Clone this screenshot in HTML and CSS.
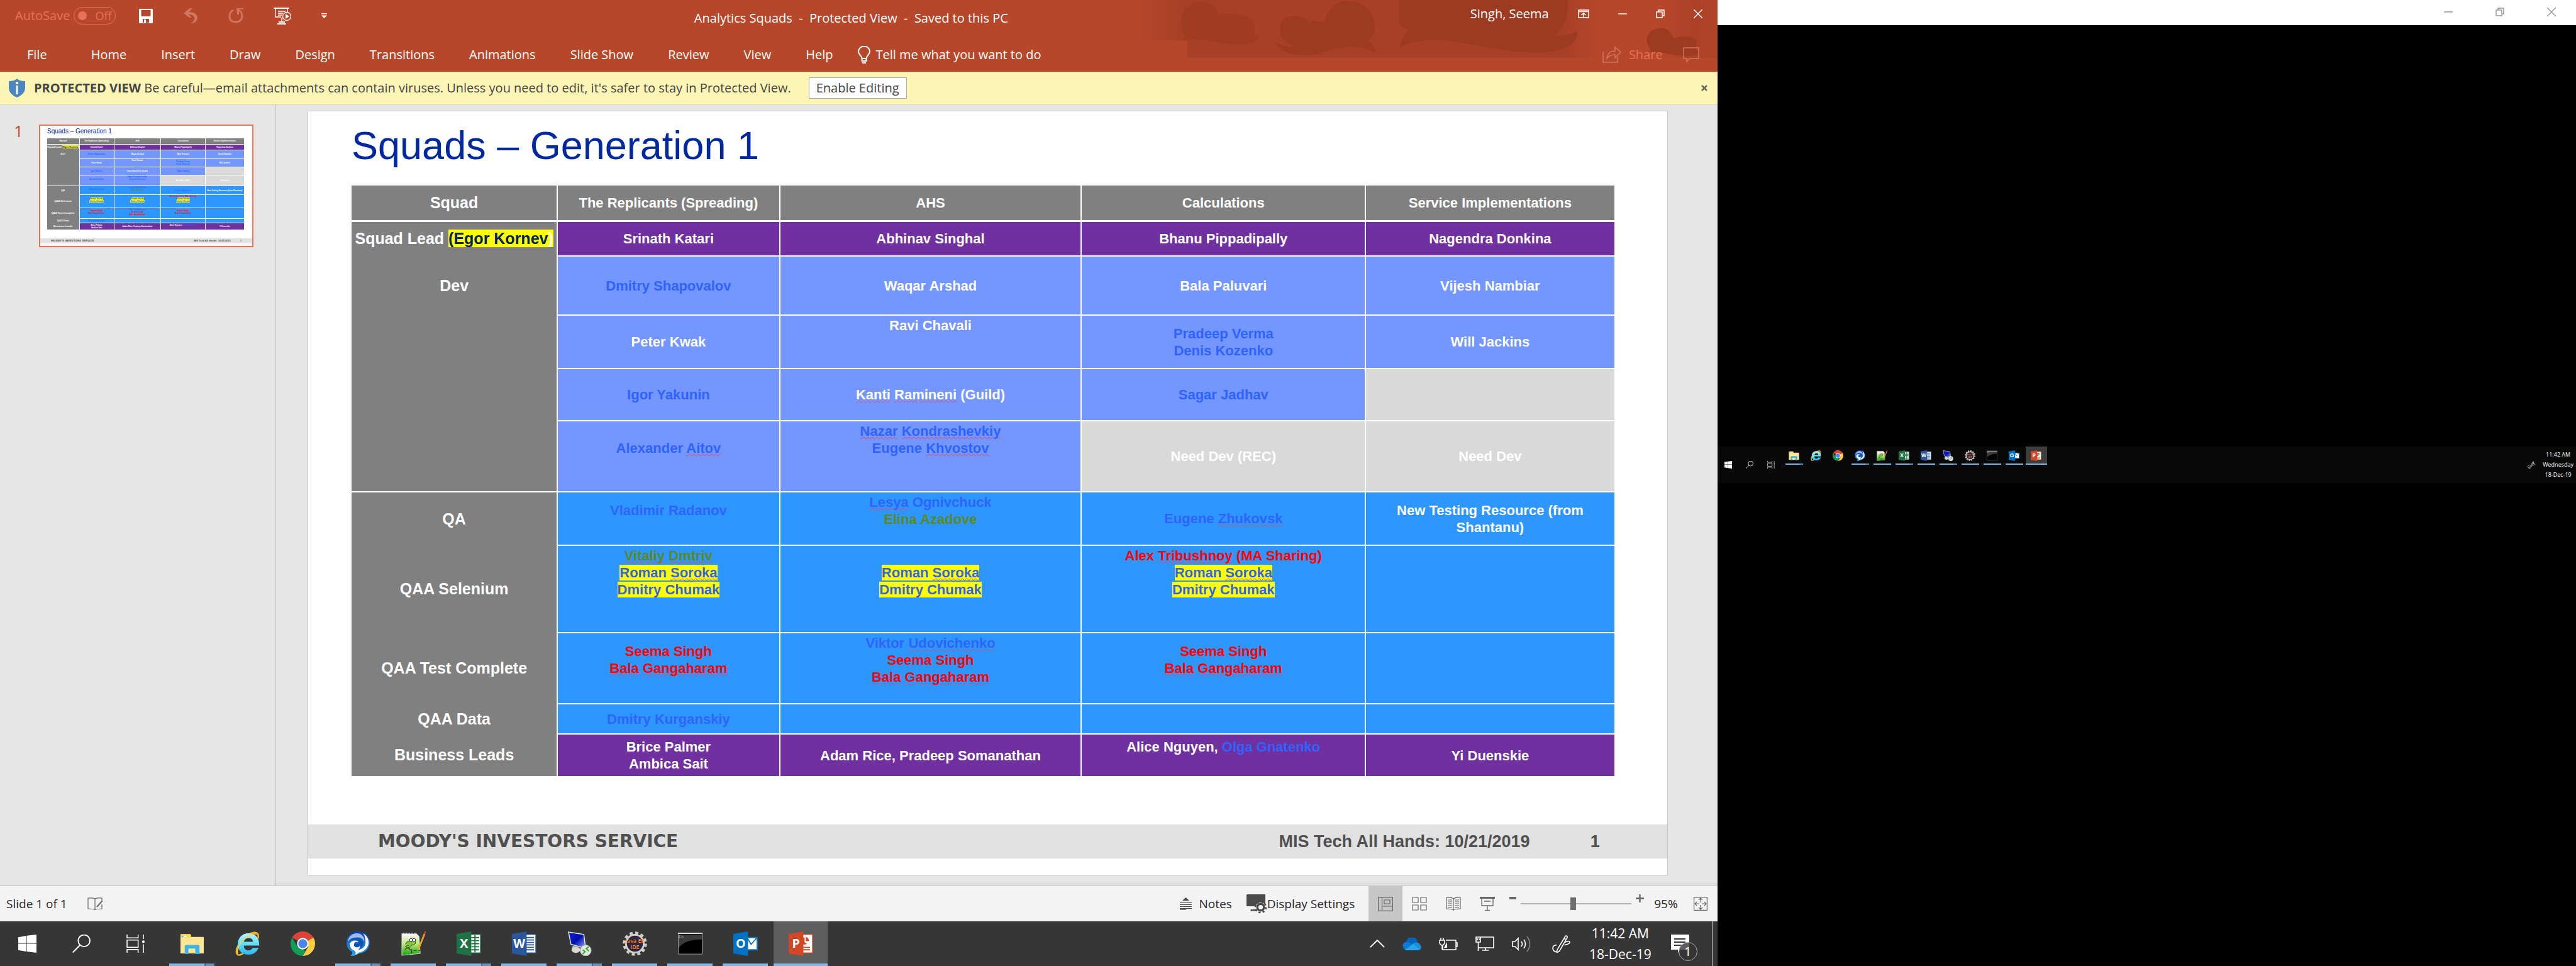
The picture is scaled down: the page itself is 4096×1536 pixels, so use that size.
FILE: index.html
```
<!DOCTYPE html>
<html lang="en">
<head>
<meta charset="utf-8">
<title>Analytics Squads - Protected View</title>
<link rel="stylesheet" href="styles.css">
</head>
<body>
<svg class="defs" aria-hidden="true">
  <defs>
    <linearGradient id="ie" x1="0" y1="0" x2="0" y2="1"><stop offset="0" stop-color="#b8f4ff"/><stop offset=".5" stop-color="#5fe0fb"/><stop offset="1" stop-color="#2cb4ec"/></linearGradient>
    <linearGradient id="np" x1="0" y1="0" x2="0" y2="1"><stop offset=".1" stop-color="#f4f4f4"/><stop offset=".5" stop-color="#b9e86a"/><stop offset="1" stop-color="#12a012"/></linearGradient>
    <linearGradient id="rd" x1="0" y1="0" x2="1" y2="1"><stop offset="0" stop-color="#0a1fd8"/><stop offset=".5" stop-color="#0010b0"/><stop offset="1" stop-color="#9db4ff"/></linearGradient>
    <linearGradient id="jb" x1="0" y1="0" x2="0" y2="1"><stop offset="0" stop-color="#0b3fae"/><stop offset="1" stop-color="#2aa5ee"/></linearGradient>
  </defs>
  <symbol id="i-start" viewBox="0 0 28 28"><path fill="#fff" d="M0 4l12-2v11H0zM13 1.800L28 0v13H13zM0 14h12v12L0 24zM13 14h15v14l-15-2z"/></symbol>
  <symbol id="i-search" viewBox="0 0 28 28"><circle cx="18" cy="9.500" r="9" fill="none" stroke="#fff" stroke-width="1.800"/><path d="M11.500 16.500L.8 27.500" stroke="#fff" stroke-width="2"/></symbol>
  <symbol id="i-tasks" viewBox="0 0 28 28"><path fill="none" stroke="#fff" stroke-width="1.500" d="M1 0v5h17V0M1 28v-5h17v5M1 8.500h17v11H1zM26 0v7M26 15v13"/><circle cx="26" cy="11" r="2" fill="#fff"/></symbol>
  <symbol id="i-folder" viewBox="0 0 40 40"><path fill="#f5c342" d="M1 5q0-1 1-1h15l2 4H1z"/><path fill="#ffe692" d="M1 9h37q1 0 1 1v25q0 1-1 1H1z"/><path fill="#ffd65b" d="M1 5h15q2 0 2 3v2H1z"/><path fill="#fff" d="M3 7h8v2H3z"/><path fill="#4db6e6" d="M3 7h3v2H3z"/><path fill="#39b5ea" d="M8 24q0-2 2-2h20q2 0 2 2v13h-7v-9H14v9H8z"/></symbol>
  <symbol id="i-ie" viewBox="0 0 40 40"><path fill="none" stroke="#f2b01e" stroke-width="2.600" d="M37 12C40 2 33-1 22 5 8 13-1 30 3 37c2 3 7 1 11-2"/><path fill="url(#ie)" d="M22 3C11 3 4 11 4 21s7 17 18 17c7 0 13-4 16-11H28c-1 3-3 4-6 4-5 0-8-3-8-8h25c1-12-6-20-17-20zm-8 14c1-4 4-6 8-6s7 2 7 6z"/><path fill="none" stroke="#fbd24a" stroke-width="1.600" d="M35 5C30 1 14 9 7 22 4 28 3 33 4 36"/></symbol>
  <symbol id="i-chrome" viewBox="0 0 40 40"><path fill="#db4437" d="M20 20L2.700 10a20 20 0 0134.600 0z"/><path fill="#ffcd40" d="M20 20L37.300 10A20 20 0 0120 40l8.700-15z"/><path fill="#0f9d58" d="M20 40A20 20 0 012.700 10l8.600 15L20 29l4 3z"/><path fill="#db4437" d="M2.700 10A20 20 0 0137.300 11H20z"/><circle cx="20" cy="20" r="9.400" fill="#fff"/><circle cx="20" cy="20" r="7.400" fill="#4a86f0"/></symbol>
  <symbol id="i-chat" viewBox="0 0 40 40"><path fill="url(#jb)" d="M20 0c11 0 19 8 19 18 0 9-6 16-16 18l-4 1c-3 2-8 4-12 3 3-1 4-4 3-7C4 30 1 25 1 18 1 8 9 0 20 0z"/><path fill="#fff" d="M28 3c5 3 9 8 9 15 0 8-6 14-14 16-3 0-2 2-8 4 3-4-1-6-3-8 9 2 20-2 20-12 0-6-1-11-4-15z"/><path fill="#9fb9e8" d="M3 18C3 9 10 3 18 3c8 0 13 6 12 14-2-5-7-8-13-7C9 10 5 13 3 18z"/><path fill="#0c57b4" d="M9 14c6-5 18-3 19 6 0 6-4 10-11 10-7 0-11-4-12-9 4 0 4 0 6 1 0-5 5-7 10-5-3-4-8-4-12-2z"/><path fill="#fff" d="M6 20c3-6 12-7 15-2-5-2-8 0-8 5 2 4 8 4 10 0 1 6-5 9-9 8-5-1-8-6-8-11z"/></symbol>
  <symbol id="i-notepad" viewBox="0 0 40 40"><path fill="url(#np)" stroke="#dcdcdc" d="M1 3h23l5 5 2 28L1 39z"/><path stroke="#444" stroke-width="2" stroke-dasharray="1 1.500" d="M2 3h22"/><path fill="#7ccc35" stroke="#334" stroke-width="1" d="M7 21c2-6 7-6 10-4 0-6 7-4 6 0 1 4-3 6-6 5-3 6-9 6-10 2l5-1"/><circle cx="16" cy="14" r="2.500" fill="#fff" stroke="#333"/><circle cx="21" cy="14" r="2.500" fill="#fff" stroke="#333"/><path fill="none" stroke="#333" stroke-width="1.200" d="M6 30c3-4 7-4 9 1M17 29v6M20 31h5M28 31h4"/><path stroke="#e9a521" stroke-width="2.800" d="M28 29L38 4"/><path stroke="#c43a3a" stroke-width="2.800" d="M38 4l1.200-4"/></symbol>
  <symbol id="i-excel" viewBox="0 0 40 40"><path fill="#fff" stroke="#207245" stroke-width="1.500" d="M22 5h17v30H22z"/><path stroke="#207245" stroke-width="2" d="M24 10h13M24 15h13M24 20h13M24 25h13M24 30h13M30 6v28"/><path fill="#207245" d="M0 4l24-4v40L0 36z"/></symbol>
  <symbol id="i-word" viewBox="0 0 40 40"><path fill="#fff" stroke="#2b579a" stroke-width="1.500" d="M22 5h17v30H22z"/><path stroke="#2b579a" stroke-width="1.800" d="M23 10h13M23 14h13M23 18h13M23 22h13M23 26h13M23 30h13"/><path fill="#2b579a" d="M0 4l24-4v40L0 36z"/></symbol>
  <symbol id="i-remote" viewBox="0 0 40 40"><path fill="url(#rd)" stroke="#e8e8e8" stroke-width="1.500" d="M2 1l25 4 3 23L6 21z"/><path fill="#b9b9b9" d="M9 23l7 2 2 6H7z"/><ellipse cx="14" cy="30" rx="7" ry="5" fill="#d8d8d8"/><circle cx="30" cy="31" r="9" fill="#e4e4e4" stroke="#a9a9a9"/><path fill="none" stroke="#34b024" stroke-width="2.200" d="M25 30l4 3-4 4M35 25l-4 3 4 4"/></symbol>
  <symbol id="i-java" viewBox="0 0 40 40"><circle cx="20" cy="20" r="17.500" fill="none" stroke="#cfcdc8" stroke-width="4.500" stroke-dasharray="5 4.160"/><circle cx="20" cy="20" r="14.500" fill="#2c2440" stroke="#d6d4cf" stroke-width="3"/></symbol>
  <symbol id="i-cmd" viewBox="0 0 40 40"><path fill="#000" stroke="#9a9fa3" stroke-width="1" d="M.5 3h39v34H.5z"/><path fill="#3b3b3b" d="M1 5h38v8C22 13 8 17 1 27z"/><path fill="#d9dee2" d="M0 2h40v2H0z"/><path fill="none" stroke="#bbb" stroke-width=".8" d="M4 7H2v3h2M6 7v1M6 9v1M7 7l2 3"/></symbol>
  <symbol id="i-outlook" viewBox="0 0 40 40"><path fill="#0072c6" d="M22 9h18v22H22z"/><path fill="#fff" d="M23 11h15v18H23z"/><path fill="none" stroke="#0072c6" stroke-width="1.800" d="M23 11l6 10 9-10"/><path fill="#0072c6" d="M0 4l24-4v40L0 36z"/></symbol>
  <symbol id="i-ppt" viewBox="0 0 40 40"><path fill="#fff" stroke="#d24726" stroke-width="1.500" d="M22 5h17v30H22z"/><path fill="#d24726" d="M22 11a6 6 0 108 9l-4-2V10a6 6 0 00-4 1zM28 9v7h5a6 6 0 00-5-7zM23 25h12v2H23zM23 29h12v2H23z"/><path fill="#d24726" d="M0 4l24-4v40L0 36z"/></symbol>
  <symbol id="i-pen" viewBox="0 0 28 28"><path fill="none" stroke="#fff" stroke-width="1.600" d="M8 27c-1 .5-1-1 0-4L20 3c1-2 4-1 3 2L12 24c-1 2-2 3-4 3zM18 6l4 2M7 16c-4 0-6 2-6 5s2 5 6 6M20 12c4-3 7-2 7 0s-3 3-8 4"/></symbol>
  <symbol id="i-min" viewBox="0 0 14 14"><path d="M0 7h14" stroke="currentColor" stroke-width="1.500"/></symbol>
  <symbol id="i-restore" viewBox="0 0 14 14"><path fill="none" stroke="currentColor" stroke-width="1.500" d="M1 4h9v9H1zM4 4V1h9v9h-3"/></symbol>
  <symbol id="i-close" viewBox="0 0 14 14"><path d="M0 0l14 14M14 0L0 14" stroke="currentColor" stroke-width="1.500"/></symbol>
</svg>

<main class="screen primary">
  <header class="chrome">
    <svg class="art" viewBox="-80 0 1576 390" preserveAspectRatio="none" aria-hidden="true">
      <defs><linearGradient id="fade" x1="0" x2="1" y1="0" y2="0"><stop offset="0" stop-color="#a84027" stop-opacity="0"/><stop offset=".08" stop-color="#a84027"/><stop offset=".74" stop-color="#a84027"/><stop offset=".8" stop-color="#b7472a"/><stop offset=".9" stop-color="#b7472a"/><stop offset=".96" stop-color="#ab4127"/><stop offset="1" stop-color="#b04428"/></linearGradient></defs>
      <path fill="url(#fade)" d="M-80 0h1576v390H66V273H-80z"/>
      <path fill="#a03c24" d="M50 130C55 50 80 10 105 12c30 5 45 50 45 90 40-20 95 0 98 60v80l8-8c5 50-30 70-60 68-60-10-90-50-146-28 5-20 10-30 8-40-8-30-10-60-8-104z"/>
      <path fill="#9c3a22" d="M316 190c0-50 15-82 38-82 25 0 35 25 42 50l12-22c5 10 15 15 28 8 10-80 30-140 66-138 48 10 70 90 70 180 0 35-10 70-18 92 15 30 20 50 19 80-50-80-100-30-150 2-50 30-100 10-120-70l3-1c15 20 30 28 50 28-20-20-40-50-40-127z"/>
      <path fill="#9c3a22" d="M636 0h458c0 110-10 180-36 242 30 0 45-10 58-30 10 50-20 140-100 142-110 5-200-84-280-84-50 0-80 20-98 58 5-50 10-90 26-125-8-15-28-30-28-60z"/>
      <path fill="#9c3a22" d="M1306 270c0-45 15-80 38-80 20 0 28 30 34 70 20-20 60-20 62 20v60l4 8c0 30-30 40-70 20-20-10-40-25-62-15 5-15 4-20 2-30-6-20-8-35-8-53z"/>
    </svg>
    <div class="titlebar">
      <div class="quick">
        <label class="autosave">AutoSave <span class="toggle"><input type="checkbox">Off</span></label>
        <button class="bare save" aria-label="Save"><svg width="22" height="23" viewBox="0 0 22 23"><path fill="#fff" d="M1 0h20l1 1v21l-1 1H1l-1-1V1zM3.500 2v10h15V2zM6 16v6h2v-5h3v5h5v-6z" fill-rule="evenodd"/></svg></button>
        <button class="bare" aria-label="Undo"><svg width="24" height="24" viewBox="0 0 24 24"><path fill="#cf7660" d="M11 0h4L9 6c9 0 14 4 14 9 0 4-3 8-8 9h-3c5-2 6-5 6-8 0-4-4-6-9-6l5 5h-4L1 8z"/></svg></button>
        <button class="bare" aria-label="Redo"><svg width="24" height="24" viewBox="0 0 24 24"><path fill="none" stroke="#cf7660" stroke-width="3" d="M8 3C4 5 2 8 2 13c0 6 4 9 10 9s10-4 10-9c0-4-2-8-6-10"/><path fill="#cf7660" d="M13 0h11v2h-7v8h-3z"/></svg></button>
        <button class="bare" aria-label="Start from beginning"><svg width="28" height="27" viewBox="0 0 28 27"><path fill="#fff" d="M0 0h25v2H0zM6 25h14v2H6zM8 22h10v2H8z"/><path fill="none" stroke="#fff" stroke-width="1.300" d="M3 2v13h9M22 2v5M7 6h12M7 9h8M7 12h6M13 16v6"/><circle cx="21" cy="14" r="6.500" fill="none" stroke="#fff" stroke-width="1.300"/><path fill="#fff" d="M19 10l6 4-6 4z"/></svg></button>
        <button class="bare" aria-label="Customize toolbar"><svg width="9" height="8" viewBox="0 0 9 8"><path fill="#fff" d="M0 0h9v1.500H0zM0 3.500h9L4.500 8z"/></svg></button>
      </div>
      <h1 class="doc-title">Analytics Squads&nbsp; -&nbsp; Protected View&nbsp; -&nbsp; Saved to this PC</h1>
      <div class="window-tools">
        <span>Singh, Seema</span>
        <button class="bare" aria-label="Ribbon options"><svg width="18" height="14" viewBox="0 0 18 14"><path fill="none" stroke="#fff" stroke-width="1.500" d="M1 1h16v12H1zM1 3.500h16M9 12V6M5.500 9L9 6l3.500 3"/></svg></button>
        <button class="bare" aria-label="Minimize"><svg width="14" height="14"><use href="#i-min"/></svg></button>
        <button class="bare" aria-label="Restore"><svg width="14" height="14"><use href="#i-restore"/></svg></button>
        <button class="bare" aria-label="Close"><svg width="14" height="14"><use href="#i-close"/></svg></button>
      </div>
    </div>
    <nav class="tabs">
      <a class="file" href="#">File</a><a href="#">Home</a><a href="#">Insert</a><a href="#">Draw</a><a href="#">Design</a><a href="#">Transitions</a><a href="#">Animations</a><a href="#">Slide Show</a><a href="#">Review</a><a href="#">View</a><a href="#">Help</a>
      <a class="tell" href="#"><svg width="20" height="28" viewBox="0 0 20 28"><path fill="none" stroke="#fff" stroke-width="2" d="M6.500 24v-4C6 15 1 14 1 9a9 8.500 0 0118 0c0 5-5 6-5.500 11v4zM6.500 20h7"/><path fill="#fff" d="M7 26h6v2H7z"/></svg>Tell me what you want to do</a>
      <button class="bare share"><svg width="30" height="26" viewBox="0 0 30 26"><path fill="none" stroke="#cf7660" stroke-width="1.500" d="M1 8v17h23v-9M7 19C8 11 13 7 20 7V1l9 8-9 9v-5c-6 0-10 2-13 6z"/></svg>Share</button>
      <button class="bare" aria-label="Comments"><svg width="26" height="24" viewBox="0 0 26 24"><path fill="none" stroke="#cf7660" stroke-width="1.500" d="M1 1h24v17H11l-5 5v-5H1z"/></svg></button>
    </nav>
  </header>

  <section class="notice">
    <svg width="26" height="30" viewBox="0 0 26 30"><path fill="#4b86c0" d="M13 0c3 3 8 4 13 4v11c0 7-6 12-13 15C6 27 0 22 0 15V4c5 0 10-1 13-4z"/><circle cx="13" cy="7" r="2.200" fill="#fff"/><path fill="#fff" d="M11.500 11h3v14h-3z"/></svg>
    <p><strong>PROTECTED VIEW</strong> Be careful—email attachments can contain viruses. Unless you need to edit, it's safer to stay in Protected View.</p>
    <button class="enable">Enable Editing</button>
    <button class="bare dismiss" aria-label="Close message"><svg width="10" height="10" viewBox="0 0 10 10"><path stroke="#666" stroke-width="2.500" d="M1 1l8 8M9 1L1 9"/></svg></button>
  </section>

  <div class="workspace">
    <aside class="thumbs">
      <span class="num">1</span>
      <div class="thumb"></div>
    </aside>
    <section class="stage">
      <article class="slide">
        <h2>Squads – Generation 1</h2>
        <table>
          <colgroup><col class="c1"><col class="c2"><col class="c3"><col class="c4"><col class="c5"></colgroup>
          <thead>
            <tr class="r56 head"><th scope="col">Squad</th><th scope="col">The Replicants (Spreading)</th><th scope="col">AHS</th><th scope="col">Calculations</th><th scope="col">Service Implementations</th></tr>
          </thead>
          <tbody>
            <tr class="r56 lead"><th scope="row">Squad Lead <mark class="navy">(Egor Kornev<i>)</i></mark></th><td>Srinath Katari</td><td>Abhinav Singhal</td><td>Bhanu Pippadipally</td><td>Nagendra Donkina</td></tr>
            <tr class="r94 dev"><th scope="row">Dev</th><td class="blue">Dmitry Shapovalov</td><td>Waqar Arshad</td><td>Bala Paluvari</td><td>Vijesh Nambiar</td></tr>
            <tr class="r85 dev"><th></th><td>Peter Kwak</td><td class="top">Ravi Chavali</td><td class="blue">Pradeep Verma<br>Denis Kozenko</td><td>Will Jackins</td></tr>
            <tr class="r83 dev"><th></th><td class="blue">Igor Yakunin</td><td><u>Kanti</u> <u>Ramineni</u> (Guild)</td><td class="blue">Sagar Jadhav</td><td class="open"></td></tr>
            <tr class="r113 dev end"><th></th><td class="blue raised">Alexander <u>Aitov</u></td><td class="blue top"><u>Nazar</u> <u>Kondrashevkiy</u><br>Eugene <u>Khvostov</u></td><td class="open">Need Dev (REC)</td><td class="open">Need Dev</td></tr>
            <tr class="r85 qa"><th scope="row">QA</th><td class="blue raised">Vladimir Radanov</td><td class="blue top"><u>Lesya</u> Ognivchuck<br><span class="green">Elina Azadove</span></td><td class="blue">Eugene <u>Zhukovsk</u></td><td>New Testing Resource (from Shantanu)</td></tr>
            <tr class="r139 qa"><th scope="row">QAA Selenium</th><td class="top"><span class="green"><u>Vitaliy</u> <u>Dmtriv</u></span><br><mark>Roman <u>Soroka</u></mark><br><mark>Dmitry Chumak</mark></td><td class="top"><br><mark>Roman <u>Soroka</u></mark><br><mark>Dmitry Chumak</mark></td><td class="top red">Alex <u>Tribushnoy</u> (MA Sharing)<br><mark>Roman <u>Soroka</u></mark><br><mark>Dmitry Chumak</mark></td><td></td></tr>
            <tr class="r113 qa"><th scope="row">QAA Test Complete</th><td class="red raised">Seema Singh<br><u>Bala</u> <u>Gangaharam</u></td><td class="red top"><span class="blue">Viktor <u>Udovichenko</u></span><br>Seema Singh<br><u>Bala</u> <u>Gangaharam</u></td><td class="red raised">Seema Singh<br><u>Bala</u> <u>Gangaharam</u></td><td></td></tr>
            <tr class="r48 qa"><th scope="row">QAA Data</th><td class="blue">Dmitry Kurganskiy</td><td></td><td></td><td></td></tr>
            <tr class="r67 lead"><th scope="row">Business Leads</th><td>Brice Palmer<br>Ambica Sait</td><td>Adam Rice, Pradeep Somanathan</td><td class="raised">Alice Nguyen, <span class="blue">Olga Gnatenko</span></td><td>Yi Duenskie</td></tr>
          </tbody>
        </table>
        <footer><span class="brand">MOODY'S INVESTORS SERVICE</span><span class="event">MIS Tech All Hands: 10/21/2019</span><span>1</span></footer>
      </article>
    </section>
  </div>

  <div class="status">
    <span>Slide 1 of 1</span>
    <button class="bare proof" aria-label="Proofing"><svg width="26" height="20" viewBox="0 0 26 20"><path fill="none" stroke="#666" stroke-width="1.200" d="M12 2v18M12 2C9 0 5 1 1 1v17c4 0 8 0 11 1.500M12 2c3-2 7-1 11-1v3M12 19.500c3-1.500 7-1.500 11-1.500v-7"/><path stroke="#666" stroke-width="2" d="M15 15l9-10"/></svg></button>
    <button class="bare notes"><svg width="19" height="20" viewBox="0 0 19 20"><path fill="#444" d="M9.500 0L15 5H4z"/><path stroke="#444" stroke-width="1.200" d="M0 8.500h19M0 11.500h19M0 14.500h19M0 17.500h19M0 19.500h10"/></svg>Notes</button>
    <button class="bare display"><svg width="32" height="30" viewBox="0 0 32 30"><path fill="#4a4a4a" d="M1 0h28l1 1v18H0V1zM7 24h12v2.500H6z"/><circle cx="22.500" cy="20.500" r="7.500" fill="#4a4a4a" stroke="#f3f3f3"/><circle cx="22.500" cy="20.500" r="8.500" fill="none" stroke="#4a4a4a" stroke-width="2.500" stroke-dasharray="3.400 3.270"/><circle cx="22.500" cy="20.500" r="3.600" fill="#f3f3f3"/></svg>Display Settings</button>
    <div class="views">
      <button class="bare on" aria-label="Normal"><svg width="24" height="23" viewBox="0 0 24 23"><path fill="none" stroke="#666" stroke-width="1.200" d="M.6.600h22.800v21.800H.6zM6.500 1v21M6.500 15H23M10 5h9v6h-9z"/></svg></button>
      <button class="bare" aria-label="Slide sorter"><svg width="24" height="22" viewBox="0 0 24 22"><path fill="none" stroke="#666" stroke-width="1.200" d="M1 1h9v8H1zM14 1h9v8h-9zM1 13h9v8H1zM14 13h9v8h-9z"/></svg></button>
      <button class="bare" aria-label="Reading view"><svg width="24" height="22" viewBox="0 0 24 22"><path fill="none" stroke="#666" stroke-width="1.200" d="M12 3v19M12 3C8 0 4 1 1 1v18c4 0 8 0 11 2M12 3c4-3 8-2 11-2v18c-4 0-8 0-11 2M3 5h7M3 8h7M3 11h7M3 14h7M3 17h7M14 5h7M14 8h7M14 11h7M14 14h7M14 17h7"/></svg></button>
      <button class="bare" aria-label="Slide show"><svg width="24" height="22" viewBox="0 0 24 22"><path fill="#666" d="M0 0h24v3H0z"/><path fill="none" stroke="#666" stroke-width="1.300" d="M3 3v11h18V3M7 7h10M12 14v7M8 21.300h8"/></svg></button>
    </div>
    <div class="zoom">
      <button class="bare minus" aria-label="Zoom out"><svg width="11" height="4"><path fill="#666" d="M0 0h11v4H0z"/></svg></button>
      <input type="range" min="10" max="190" value="95" aria-label="Zoom">
      <button class="bare plus" aria-label="Zoom in"><svg width="13" height="13" viewBox="0 0 13 13"><path stroke="#666" stroke-width="2.400" d="M0 6.500h13M6.500 0v13"/></svg></button>
      <span>95%</span>
      <button class="bare" aria-label="Fit slide"><svg width="22" height="22" viewBox="0 0 22 22"><path fill="none" stroke="#666" stroke-width="1.200" d="M.6.600h20.800v20.800H.6zM11 9V2M8 5l3-3 3 3M11 13v7M8 17l3 3 3-3M9 11H2M5 8l-3 3 3 3M13 11h7M17 8l3 3-3 3"/></svg></button>
    </div>
  </div>

  <nav class="taskbar">
    <button class="sys" aria-label="Start"><svg><use href="#i-start"/></svg></button>
    <button class="sys" aria-label="Search"><svg><use href="#i-search"/></svg></button>
    <button class="sys" aria-label="Task view"><svg><use href="#i-tasks"/></svg></button>
    <div class="apps">
      <button class="run many" aria-label="File Explorer"><svg><use href="#i-folder"/></svg></button>
      <button aria-label="Internet Explorer"><svg><use href="#i-ie"/></svg></button>
      <button aria-label="Chrome"><svg><use href="#i-chrome"/></svg></button>
      <button class="run many" aria-label="Jabber"><svg><use href="#i-chat"/></svg></button>
      <button class="run" aria-label="Notepad++"><svg><use href="#i-notepad"/></svg></button>
      <button class="run many" aria-label="Excel"><svg viewBox="0 0 40 40"><use href="#i-excel"/><text class="letter" x="12" y="27">X</text></svg></button>
      <button class="run" aria-label="Word"><svg viewBox="0 0 40 40"><use href="#i-word"/><text class="letter" x="12" y="27">W</text></svg></button>
      <button class="run many" aria-label="Remote Desktop"><svg><use href="#i-remote"/></svg></button>
      <button class="run" aria-label="Eclipse"><svg viewBox="0 0 40 40"><use href="#i-java"/><text class="tag" x="20" y="18">Java EE</text><text class="tag" x="20" y="29">IDE</text></svg></button>
      <button class="run" aria-label="Command Prompt"><svg><use href="#i-cmd"/></svg></button>
      <button class="run" aria-label="Outlook"><svg viewBox="0 0 40 40"><use href="#i-outlook"/><text class="letter" x="12" y="27">O</text></svg></button>
      <button class="run active" aria-label="PowerPoint"><svg viewBox="0 0 40 40"><use href="#i-ppt"/><text class="letter" x="12" y="27">P</text></svg></button>
    </div>
    <div class="tray">
      <svg width="24" height="13" viewBox="0 0 24 13"><path fill="none" stroke="#fff" stroke-width="1.800" d="M1 12L12 1l11 11"/></svg>
      <svg width="30" height="20" viewBox="0 0 30 20"><path fill="#0364b8" d="M6 8a9 9 0 0118-1l-9 6z"/><path fill="#0a7bd8" d="M3 18C-1 14 0 8 5 7c5-1 8 3 11 4L5 20z"/><path fill="#1490df" d="M15 11c4-4 10-5 13 0 3 4 2 9-3 9z"/><path fill="#28a8ea" d="M4 19l13-9 10 8c-1 1-2 2-5 2H6z"/></svg>
      <svg width="30" height="20" viewBox="0 0 30 20"><path fill="none" stroke="#fff" stroke-width="1.500" d="M11 4h16v15H6v-7M27 8h2v6h-2M3 0v4M7 0v4M1 4h8v4q-1 4-4 4t-4-4zM5 12v7"/><path fill="#fff" d="M8 16h5V7z"/></svg>
      <svg width="30" height="23" viewBox="0 0 30 23"><path fill="none" stroke="#fff" stroke-width="1.600" d="M8 1h21v17H5M1 1h7v8H1zM4.500 9v14M16 18v4M11 22h10M3 3v3M6 3v3"/></svg>
      <svg width="30" height="26" viewBox="0 0 30 26"><path fill="none" stroke="#fff" stroke-width="1.600" d="M1 9h4l5-5v18l-5-5H1zM15 9q3 4 0 8M19 6q5 7 0 14"/><path fill="none" stroke="#888" stroke-width="1.600" d="M24 1q9 12 0 24"/></svg>
      <svg class="pen" width="29" height="29"><use href="#i-pen"/></svg>
      <time>11:42 AM<br>18-Dec-19</time>
      <div class="bell"><svg width="29" height="30" viewBox="0 0 29 30"><path fill="#fff" d="M0 0h29v24H15l-4 5v-5H0z"/><path stroke="#363636" stroke-width="2" d="M5 7h18M5 12h18M5 17h13"/></svg><b>1</b></div>
    </div>
  </nav>
</main>

<section class="screen secondary">
  <div class="blank-title">
    <button class="bare" aria-label="Minimize"><svg width="14" height="14"><use href="#i-min"/></svg></button>
    <button class="bare" aria-label="Restore"><svg width="14" height="14"><use href="#i-restore"/></svg></button>
    <button class="bare" aria-label="Close"><svg width="14" height="14"><use href="#i-close"/></svg></button>
  </div>
  <nav class="taskbar small">
    <button class="sys" aria-label="Start"><svg><use href="#i-start"/></svg></button>
    <button class="sys" aria-label="Search"><svg><use href="#i-search"/></svg></button>
    <button class="sys" aria-label="Task view"><svg><use href="#i-tasks"/></svg></button>
    <div class="apps">
      <button class="run many" aria-label="File Explorer"><svg><use href="#i-folder"/></svg></button>
      <button aria-label="Internet Explorer"><svg><use href="#i-ie"/></svg></button>
      <button aria-label="Chrome"><svg><use href="#i-chrome"/></svg></button>
      <button class="run many" aria-label="Jabber"><svg><use href="#i-chat"/></svg></button>
      <button class="run" aria-label="Notepad++"><svg><use href="#i-notepad"/></svg></button>
      <button class="run many" aria-label="Excel"><svg viewBox="0 0 40 40"><use href="#i-excel"/><text class="letter" x="12" y="27">X</text></svg></button>
      <button class="run" aria-label="Word"><svg viewBox="0 0 40 40"><use href="#i-word"/><text class="letter" x="12" y="27">W</text></svg></button>
      <button class="run many" aria-label="Remote Desktop"><svg><use href="#i-remote"/></svg></button>
      <button class="run" aria-label="Eclipse"><svg viewBox="0 0 40 40"><use href="#i-java"/><text class="tag" x="20" y="18">Java EE</text><text class="tag" x="20" y="29">IDE</text></svg></button>
      <button class="run" aria-label="Command Prompt"><svg><use href="#i-cmd"/></svg></button>
      <button class="run" aria-label="Outlook"><svg viewBox="0 0 40 40"><use href="#i-outlook"/><text class="letter" x="12" y="27">O</text></svg></button>
      <button class="run active" aria-label="PowerPoint"><svg viewBox="0 0 40 40"><use href="#i-ppt"/><text class="letter" x="12" y="27">P</text></svg></button>
    </div>
    <div class="tray">
      <svg width="12" height="12"><use href="#i-pen"/></svg>
      <time>11:42 AM<br>Wednesday<br>18-Dec-19</time>
    </div>
  </nav>
</section>
<script src="thumbs.js"></script>
</body>
</html>
```
FILE: thumbs.js
```
const slide = document.querySelector('.slide');
const mini = slide.cloneNode(true);
mini.className = 'mini';
mini.setAttribute('aria-hidden', 'true');
document.querySelector('.thumb').append(mini);
```
FILE: styles.css
```
* { box-sizing: border-box; }
body {
  margin: 0;
  min-height: 100vh;
  display: grid;
  grid-template-columns: 2fr 1fr;
  background: #000;
  font: 20px/28px "Open Sans", "Noto Sans", sans-serif;
  color: #262626;
}
.defs { position: absolute; width: 0; height: 0; }
svg { display: block; flex: none; }
a { color: inherit; text-decoration: none; }
button { font: inherit; color: inherit; }
.bare { border: 0; padding: 0; background: none; display: flex; align-items: center; }
h1, h2, p { margin: 0; font-weight: 400; }

.screen { display: flex; flex-direction: column; min-width: 0; }

/* title bar and ribbon tabs */
.chrome { position: relative; background: #b7472a; color: #fff; }
.art { position: absolute; top: 0; right: 0; width: 34%; height: 92px; }
.titlebar {
  position: relative;
  display: grid;
  grid-template-columns: 1fr auto 1fr;
  height: 60px;
  padding-right: 24px;
}
.quick { display: flex; align-items: center; gap: 48px; height: 50px; padding-left: 24px; }
.autosave { display: flex; align-items: center; gap: 6px; color: #e8705a; margin-right: -11px; }
.toggle {
  display: flex; align-items: center; gap: 13px;
  width: 67px; height: 28px; padding-left: 6px;
  border: 1px solid #e8705a; border-radius: 14px;
  font-size: 18px;
}
.toggle input { appearance: none; margin: 0; width: 14px; height: 14px; border-radius: 50%; background: #e8705a; }
.doc-title { font-size: 20px; line-height: 58px; }
.window-tools { display: flex; justify-content: flex-end; align-items: center; gap: 46px; height: 44px; }
.tabs { position: relative; display: flex; align-items: center; gap: 55px; height: 54px; padding: 0 29px 0 43px; }
.file { margin-right: 15px; }
.tell { display: flex; align-items: center; gap: 8px; margin-left: -15px; }
.share { margin-left: auto; gap: 12px; color: #e8705a; margin-right: -23px; }

/* protected view message */
.notice {
  display: flex; align-items: center;
  height: 52px; padding: 0 16px 0 14px;
  background: #fcf5b6; color: #444;
  border: solid #d8d48a; border-width: 1px 0;
}
.notice p { margin: 0 28px 0 14px; white-space: nowrap; }
.notice strong { font-weight: 700; }
.enable { height: 34px; padding: 0 11px; background: #fdfdfd; border: 1px solid #ababab; line-height: 30px; }
.dismiss { margin-left: auto; }

/* slide list and stage */
.workspace { flex: 1; display: flex; background: #e6e6e6; }
.thumbs { width: 439px; flex: none; display: flex; gap: 28px; align-items: flex-start; padding: 32px 0 0 22px; border-right: 1px solid #bfbfbf; }
.num { width: 12px; font-size: 26px; line-height: 20px; color: #d24726; }
.thumb { width: 341px; height: 195px; border: 2px solid #f0714f; background: #fff; }
.stage { flex: 1; display: flex; padding: 10px 79px 13px 50px; margin-bottom: 2px; border-bottom: 1px solid #bfbfbf; }

.slide, .mini {
  flex: 1; display: flex; flex-direction: column;
  background: #fff;
  font-family: "Liberation Sans", Arial, sans-serif;
}
.slide { border: 1px solid #c6c6c6; padding: 18px 0 26px; }
.slide h2 { margin: 0 69px 28px; font-size: 63px; line-height: 72px; color: #0028a0; }
.slide table { margin: 0 84px 0 69px; height: 939px; }
table { border-collapse: collapse; table-layout: fixed; font-size: 22px; line-height: 27px; font-weight: 700; color: #fff; text-align: center; }
.c1 { width: 16.300%; } .c2 { width: 17.600%; } .c3 { width: 23.900%; } .c4 { width: 22.500%; } .c5 { width: 19.700%; }
.r48 { height: 48px; } .r56 { height: 56px; } .r67 { height: 67px; } .r83 { height: 83px; }
.r85 { height: 85px; } .r94 { height: 94px; } .r113 { height: 113px; } .r139 { height: 139px; }
th, td { padding: 0 10px; border: 2px solid #fff; }
th { background: #808080; padding: 0; }
tbody th, th:first-child { font-size: 25px; }
thead th { border-bottom-width: 3px; }
tbody th { border-top: 0; border-bottom: 0; white-space: nowrap; }
tbody .end th { border-bottom: 2px solid #fff; }
th:first-child { border-left: 0; }
tr > :last-child { border-right: 0; }
thead th { border-top: 0; }
tbody tr:last-child > * { border-bottom: 0; }
.lead td { background: #7030a0; }
.dev td { background: #7396ff; }
.qa td { background: #2e96ff; }
.dev .open { background: #d9d9d9; }
.top { vertical-align: top; padding-top: 2px; }
.raised { padding-bottom: 27px; }
.blue { color: #2e63ff; }
.green { color: #5a8a1e; }
.red { color: #f00; }
mark { background: #ff0; color: #3364e0; }
.navy { color: #002060; }
.navy i { font-style: normal; color: #fff; }
u { text-decoration: underline wavy 1px #e8425a; text-underline-offset: 1px; text-decoration-skip-ink: none; }
footer { display: flex; align-items: center; background: #e1e1e1; color: #505050; font-weight: 700; }
.slide footer { margin-top: auto; height: 54px; padding: 0 107px 0 111px; font-size: 27px; }
.brand { margin-right: auto; font-family: "DejaVu Sans", sans-serif; }
.slide .brand { font-size: 28px; }
.slide .event { margin-right: 96px; }

/* slide miniature */
.mini { height: 191px; padding: 4px 0; }
.mini h2 { margin: 0 11px 6px; font-size: 10px; line-height: 10px; color: #0028a0; }
.mini table { margin: 0 13px 0 11px; height: 145px; font-size: 3px; line-height: 4px; }
.mini th, .mini td { padding: 0 1px; border-width: 1px; }
.mini tbody th { border-top-width: 0; border-bottom-width: 0; }
.mini tbody .end th { border-bottom-width: 1px; }
.mini tbody th, .mini th:first-child { font-size: 4px; padding: 0; }
.mini .raised { padding-bottom: 4px; }
.mini .r48 { height: 7px; } .mini .r56 { height: 9px; } .mini .r67 { height: 10px; } .mini .r83 { height: 13px; }
.mini .r85 { height: 13px; } .mini .r94 { height: 14px; } .mini .r113 { height: 17px; } .mini .r139 { height: 21px; }
.mini u { text-decoration: none; }
.mini footer { margin-top: auto; height: 8px; padding: 0 17px; font-size: 4px; line-height: 8px; }
.mini .event { margin-right: 15px; }

/* status bar */
.status { display: flex; align-items: center; height: 57px; padding: 0 16px 0 10px; background: #f3f3f3; border-top: 1px solid #bfbfbf; font-size: 19px; }
.proof { margin-left: 32px; }
.notes { margin-left: auto; gap: 11px; }
.display { margin: 0 22px 0 23px; gap: 1px; }
.views { display: flex; align-self: stretch; }
.views button { width: 54px; justify-content: center; }
.views .on { background: #c6c6c6; }
.zoom { display: flex; align-items: center; gap: 7px; margin-left: 8px; }
.zoom .minus, .zoom .plus { margin-bottom: 18px; }
.zoom span { margin: 0 18px 0 9px; }
.zoom input {
  appearance: none; width: 176px; height: 20px; margin: 0;
  background: linear-gradient(#b0b0b0, #b0b0b0) center / 100% 2px no-repeat;
}
.zoom input::-webkit-slider-thumb { appearance: none; width: 9px; height: 20px; background: #6e6e6e; }

/* taskbars */
.taskbar { display: flex; height: 71px; background: #363636; color: #fff; }
.taskbar button { border: 0; padding: 0; width: 86px; background: none; display: flex; align-items: center; justify-content: center; }
.taskbar button svg { width: 39px; height: 39px; }
.taskbar .sys svg { width: 29px; height: 29px; }
.letter { font-size: 20px; font-weight: 700; text-anchor: middle; fill: #fff; }
.tag { font-size: 9px; font-weight: 600; text-anchor: middle; fill: #ff8a1c; }
.apps { display: flex; gap: 2px; margin-left: 4px; }
.apps .run { background: linear-gradient(#76b9ed, #76b9ed) center bottom / 72px 4px no-repeat; }
.apps .many { background: linear-gradient(90deg, #76b9ed 56px, #456f91 56px 58px, #6194bd 58px) center bottom / 72px 4px no-repeat; }
.apps .active { background: linear-gradient(#76b9ed, #76b9ed) center bottom / 100% 4px no-repeat #5e5e5e; }
.tray { display: flex; align-items: center; gap: 28px; margin-left: auto; padding-right: 7px; border-right: 2px solid #888; margin-right: 7px; }
.tray time { text-align: center; line-height: 33px; }
.primary time { font-size: 21px; }
.tray .pen { margin: 0 2px 0 6px; }
.bell { position: relative; width: 58px; margin-left: 3px; }
.bell b {
  position: absolute; left: 12px; top: 12px;
  width: 30px; height: 30px; border: 1px solid #aaa; border-radius: 50%;
  background: #363636cc; font-weight: 400; text-align: center;
}

/* second monitor */
.blank-title { display: flex; align-items: center; justify-content: flex-end; gap: 68px; height: 40px; padding: 0 32px 2px 0; background: #fff; color: #999; }
.small { margin-top: 670px; height: 58px; background: #080808; }
.taskbar.small button { width: 34px; }
.taskbar.small .sys svg { width: 12px; height: 12px; }
.small .apps { gap: 1px; margin-left: 3px; height: 29px; }
.taskbar.small .apps svg { width: 17px; height: 17px; }
.apps { flex: none; }
.small .apps .run { background-size: 28px 2px; }
.small .apps .many { background-image: linear-gradient(90deg, #76b9ed 22px, #6194bd 22px); }
.small .apps .active { background-color: #3d3d3d; background-size: 100% 2px; }
.small .tray { gap: 12px; border: 0; margin-right: 0; padding-right: 4px; font-size: 9px; }
.small time { line-height: 16px; }
```
